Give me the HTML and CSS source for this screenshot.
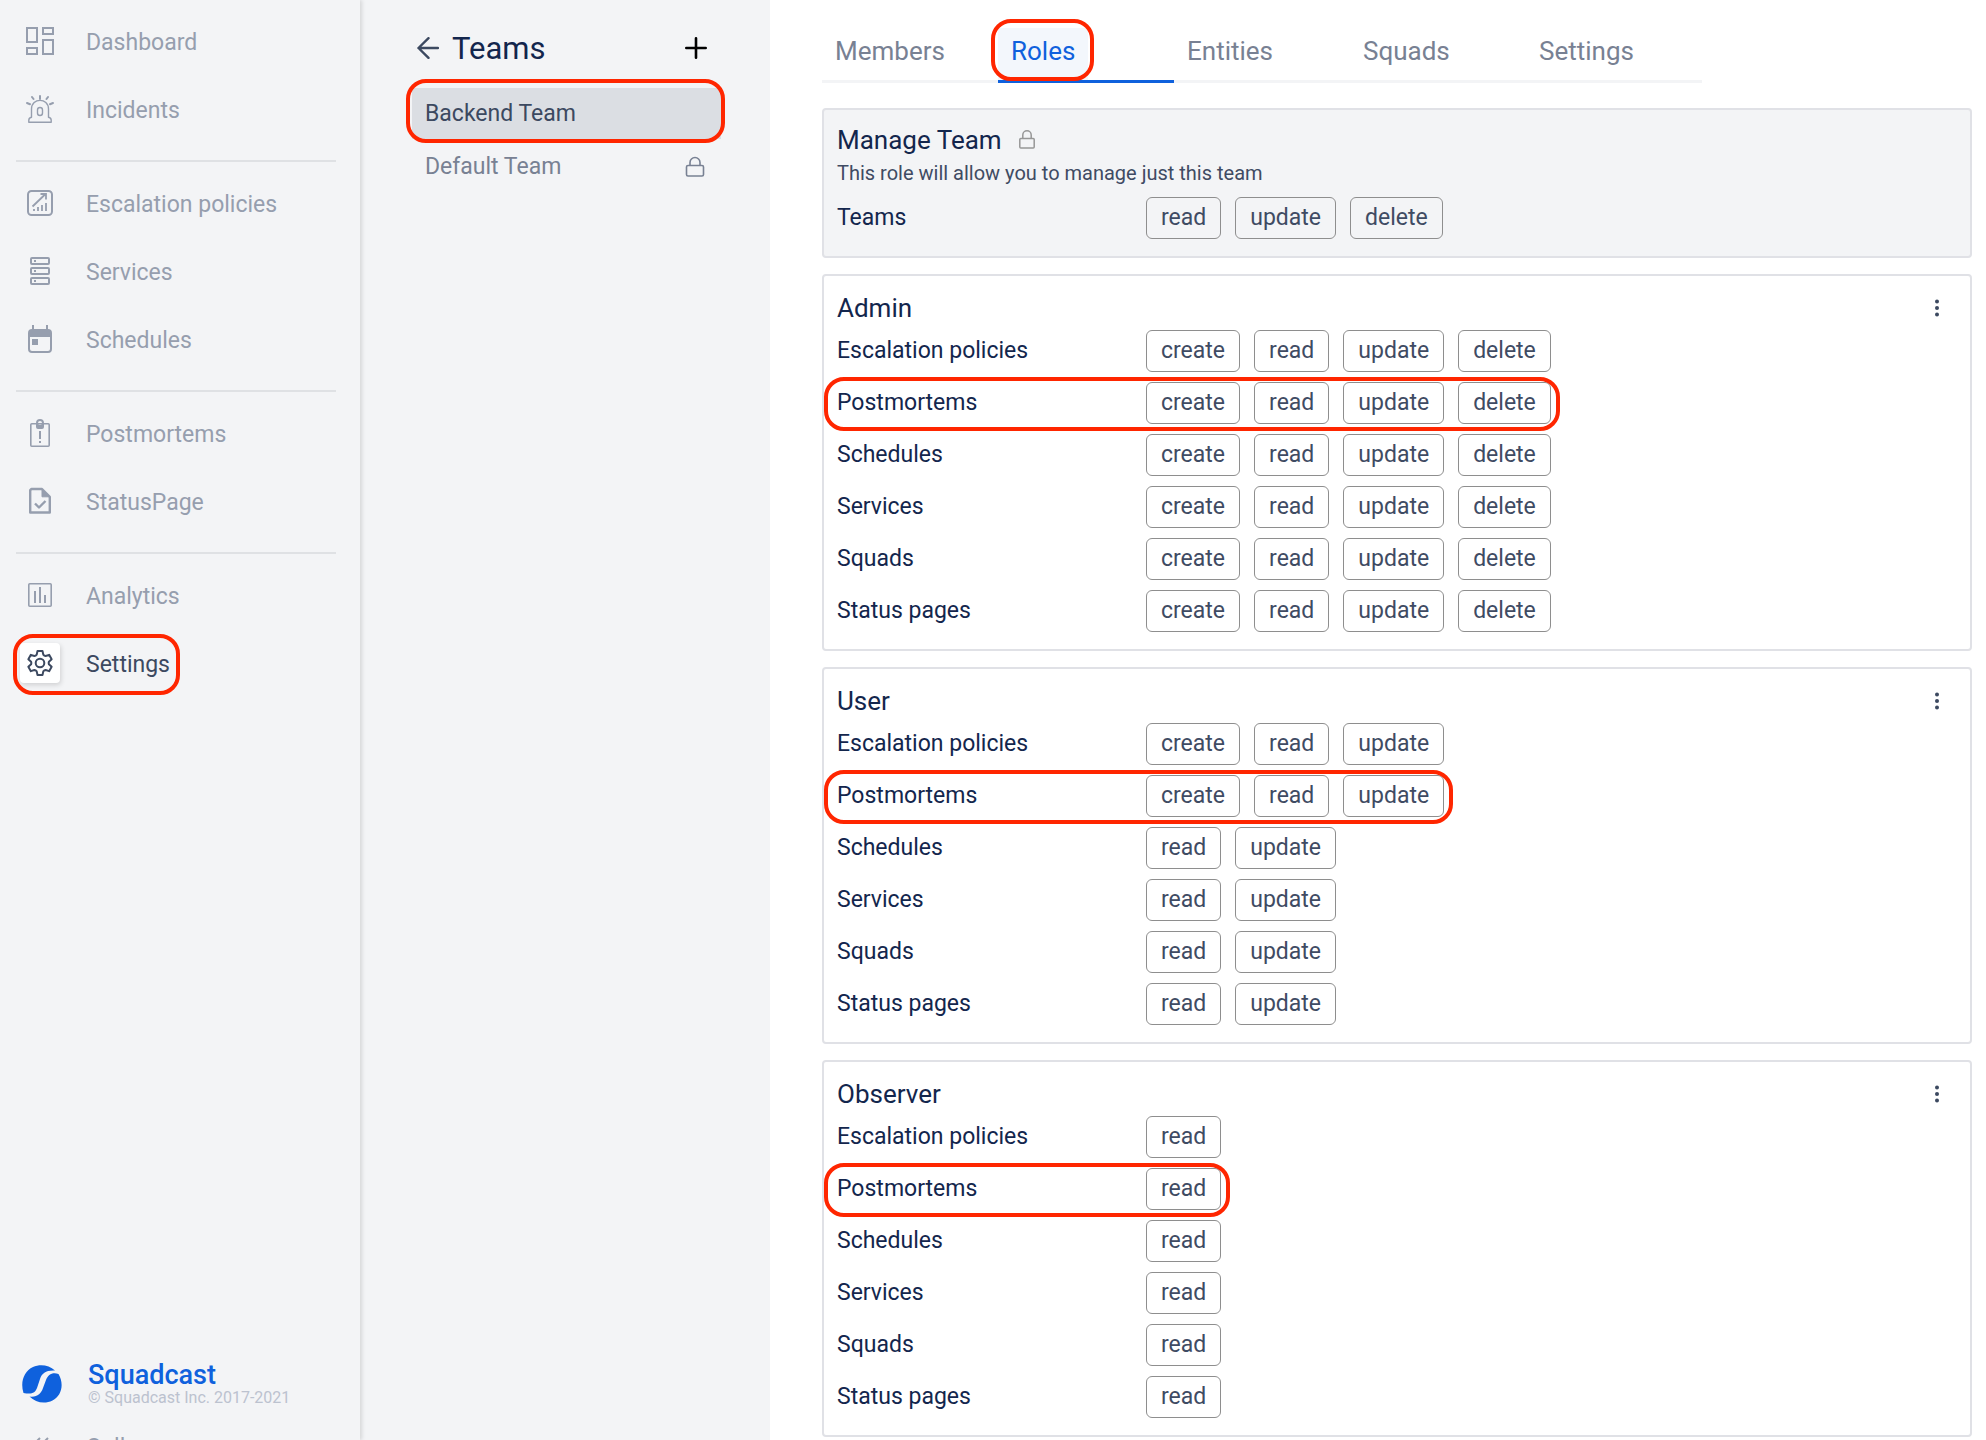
FILE: index.html
```html
<!DOCTYPE html>
<html lang="en">
<head>
<meta charset="utf-8">
<title>Squadcast – Team roles</title>
<link rel="stylesheet" href="styles.css">
</head>
<body>
<div class="app">
  <aside class="sidebar">
    <nav class="nav" aria-label="Main">
      <div class="nav-group">
        <a class="nav-item" href="#"><span class="nav-icon"><svg width="28" height="28" viewBox="0 0 28 28" fill="none" stroke="currentColor" stroke-width="2"><path d="M1 1h10v14H1zM17 1h10v6H17zM1 21h10v6H1zM17 13h10v14H17z"/></svg></span><span class="nav-text">Dashboard</span></a>
        <a class="nav-item" href="#"><span class="nav-icon"><svg width="28" height="28" viewBox="0 0 28 28" fill="none" stroke="currentColor" stroke-width="1.400" stroke-linecap="round" stroke-linejoin="round"><path d="M5.500 22.300V14C5.500 2.500 22.500 2.500 22.500 14v8.300c2 .3 2.700 1.200 2.700 3v2H2.800v-2c0-1.800.7-2.700 2.700-3z"/><rect x="11.500" y="12.500" width="5" height="8" rx="2.500"/><path stroke-width="2" d="M14 1v3M6 2l1.500 2M22 2l-1.500 2M1 8l3 1.200M27 8l-3 1.200"/></svg></span><span class="nav-text">Incidents</span></a>
      </div>
      <div class="nav-group">
        <a class="nav-item" href="#"><span class="nav-icon"><svg width="28" height="28" viewBox="0 0 28 28" fill="none" stroke="currentColor" stroke-width="2"><rect x="2" y="2" width="24" height="24" rx="3.500"/><path d="M6.500 17.500 19 5.500M14.500 5H20v5.500" stroke-width="1.800"/><path d="M8 20v2M12 18v4M16 16v6M20 14v8" stroke-width="1.800"/></svg></span><span class="nav-text">Escalation policies</span></a>
        <a class="nav-item" href="#"><span class="nav-icon"><svg width="28" height="28" viewBox="0 0 28 28" fill="none" stroke="currentColor" stroke-width="2"><rect x="5" y="1" width="18" height="6" rx="1"/><rect x="5" y="11" width="18" height="6" rx="1"/><rect x="5" y="21" width="18" height="6" rx="1"/><path d="M8 4h2M8 14h2M8 24h2"/></svg></span><span class="nav-text">Services</span></a>
        <a class="nav-item" href="#"><span class="nav-icon"><svg width="28" height="28" viewBox="0 0 28 28" fill="none" stroke="currentColor" stroke-width="2"><rect x="3" y="5" width="22" height="22" rx="3"/><path d="M7 0v5M21 0v5"/><path fill="currentColor" stroke="none" d="M3 5h22v7H3zM6 14h6v6H6z"/></svg></span><span class="nav-text">Schedules</span></a>
      </div>
      <div class="nav-group">
        <a class="nav-item" href="#"><span class="nav-icon"><svg width="28" height="28" viewBox="0 0 28 28" fill="none" stroke="currentColor" stroke-width="1.600"><rect x="4.800" y="4.800" width="18.400" height="22.400" rx="1"/><path d="M14 12v8M14 22v2" stroke-width="2"/><path fill="currentColor" stroke="none" fill-rule="evenodd" d="M10 4a4 4 0 0 1 8 0v4a2 2 0 0 1-2 2h-4a2 2 0 0 1-2-2zM14 2a2 2 0 1 0 0 4 2 2 0 0 0 0-4z"/></svg></span><span class="nav-text">Postmortems</span></a>
        <a class="nav-item" href="#"><span class="nav-icon"><svg width="28" height="28" viewBox="0 0 28 28" fill="none" stroke="currentColor" stroke-width="2.400" stroke-linejoin="round"><path d="M5.500 2H16l7.800 7.800V25.500H4.200V3.200z"/><path d="M9 16.500l4 4 6.500-6.500"/><path fill="currentColor" d="M16 2v7.800h7.800z" stroke-width="1"/></svg></span><span class="nav-text">StatusPage</span></a>
      </div>
      <div class="nav-group">
        <a class="nav-item" href="#"><span class="nav-icon"><svg width="28" height="28" viewBox="0 0 28 28" fill="none" stroke="currentColor" stroke-width="1.600"><rect x="2.800" y="2.800" width="22.400" height="22.400" rx="1"/><path d="M9 10v12M14 6v16M19 14v8" stroke-width="2"/></svg></span><span class="nav-text">Analytics</span></a>
        <a class="nav-item nav-item-active" href="#"><span class="nav-icon"><svg width="28" height="28" viewBox="-14 -14 28 28" fill="none" stroke="currentColor" stroke-width="2" stroke-linejoin="round"><path d="M-2.500-12H2.500L3.300-8.400Q4.200-7.200 5.620-7.060L9.140-8.170 11.640-3.830 8.920-1.340Q8.400 0 8.920 1.340L11.640 3.830 9.140 8.170 5.620 7.060Q4.200 7.200 3.300 8.400L2.500 12H-2.500L-3.300 8.400Q-4.200 7.200-5.620 7.060L-9.140 8.170-11.640 3.830-8.920 1.340Q-8.400 0-8.920-1.340L-11.640-3.830-9.140-8.170-5.620-7.060Q-4.200-7.200-3.300-8.400z"/><circle r="4.300"/></svg></span><span class="nav-text">Settings</span><span class="mark mark-nav"></span></a>
      </div>
    </nav>
    <footer class="side-foot">
      <div class="brand">
        <svg class="brand-logo" width="40" height="38" viewBox="0 0 40 38" fill="#0f61dd"><path d="M1.500 28C-2 17 2 6 11 2 18-1 27 0 33 5.500 24 5 20 8 18 14l-3 9c-2 5-5 6.500-13.500 5z"/><path d="M7.500 31.500C15 32.500 19 29 21 23l3-8c2-5 6-8 12.500-6 6 10 3 22-6 26.500-8 4-17 2-23-4z"/></svg>
        <div class="brand-text"><strong class="brand-name">Squadcast</strong><small class="brand-copy">© Squadcast Inc. 2017-2021</small></div>
      </div>
      <button class="nav-item collapse" type="button"><span class="nav-icon"><svg width="28" height="28" viewBox="0 0 28 28" fill="none" stroke="currentColor" stroke-width="2"><path d="M14 6l-8 8 8 8M22 6l-8 8 8 8"/></svg></span><span class="nav-text">Collapse</span></button>
    </footer>
  </aside>

  <section class="teams">
    <header class="teams-head">
      <button class="icon-btn" type="button" aria-label="Back"><svg width="22" height="22" viewBox="0 0 22 22" fill="none" stroke="#3c4960" stroke-width="2.400" stroke-linecap="round" stroke-linejoin="round"><path d="M21 11H1.500M11.500 1.200 1.500 11l10 9.800"/></svg></button>
      <h1 class="teams-title">Teams</h1>
      <button class="icon-btn" type="button" aria-label="Add team"><svg width="22" height="22" viewBox="0 0 22 22" fill="none" stroke="#000" stroke-width="2.600" stroke-linecap="round"><path d="M11 1.300v19.400M1.300 11h19.400"/></svg></button>
    </header>
    <a class="team team-active" href="#">Backend Team<span class="mark mark-team"></span></a>
    <a class="team" href="#">Default Team<svg width="20" height="22" viewBox="0 0 20 22" fill="none" stroke="currentColor" stroke-width="1.600"><rect x="1.500" y="9.500" width="17" height="10.500" rx="1.500"/><path d="M5 9.500V6.500a5 5 0 0 1 10 0v3"/></svg></a>
  </section>

  <main class="main">
    <nav class="tabs" aria-label="Team sections">
      <a class="tab" href="#"><span class="tab-label">Members</span></a>
      <a class="tab tab-active" href="#"><span class="tab-label">Roles<span class="mark mark-tab"></span></span></a>
      <a class="tab" href="#"><span class="tab-label">Entities</span></a>
      <a class="tab" href="#"><span class="tab-label">Squads</span></a>
      <a class="tab" href="#"><span class="tab-label">Settings</span></a>
    </nav>

    <section class="card card-locked">
      <header class="card-head"><h2 class="card-title">Manage Team</h2><svg class="card-lock" width="18" height="20" viewBox="0 0 18 20" fill="none" stroke="#979797" stroke-width="1.500"><rect x="1.800" y="8.500" width="14.400" height="9.500" rx="1"/><path d="M4.800 8.500V5a4.200 4.200 0 0 1 8.400 0v3.500"/></svg></header>
      <p class="card-desc">This role will allow you to manage just this team</p>
      <table class="perms">
        <tr><th scope="row">Teams</th><td><span class="chip">read</span><span class="chip">update</span><span class="chip">delete</span></td></tr>
      </table>
    </section>

    <section class="card">
      <header class="card-head"><h2 class="card-title">Admin</h2><button class="icon-btn more" type="button" aria-label="Admin options"><svg width="6" height="18" viewBox="0 0 6 18" fill="#3c4960"><circle cx="3" cy="2.500" r="2"/><circle cx="3" cy="9" r="2"/><circle cx="3" cy="15.500" r="2"/></svg></button></header>
      <table class="perms">
        <tr><th scope="row">Escalation policies</th><td><span class="chip">create</span><span class="chip">read</span><span class="chip">update</span><span class="chip">delete</span></td></tr>
        <tr><th scope="row">Postmortems</th><td><span class="chip">create</span><span class="chip">read</span><span class="chip">update</span><span class="chip">delete</span><span class="mark mark-row"></span></td></tr>
        <tr><th scope="row">Schedules</th><td><span class="chip">create</span><span class="chip">read</span><span class="chip">update</span><span class="chip">delete</span></td></tr>
        <tr><th scope="row">Services</th><td><span class="chip">create</span><span class="chip">read</span><span class="chip">update</span><span class="chip">delete</span></td></tr>
        <tr><th scope="row">Squads</th><td><span class="chip">create</span><span class="chip">read</span><span class="chip">update</span><span class="chip">delete</span></td></tr>
        <tr><th scope="row">Status pages</th><td><span class="chip">create</span><span class="chip">read</span><span class="chip">update</span><span class="chip">delete</span></td></tr>
      </table>
    </section>

    <section class="card">
      <header class="card-head"><h2 class="card-title">User</h2><button class="icon-btn more" type="button" aria-label="User options"><svg width="6" height="18" viewBox="0 0 6 18" fill="#3c4960"><circle cx="3" cy="2.500" r="2"/><circle cx="3" cy="9" r="2"/><circle cx="3" cy="15.500" r="2"/></svg></button></header>
      <table class="perms">
        <tr><th scope="row">Escalation policies</th><td><span class="chip">create</span><span class="chip">read</span><span class="chip">update</span></td></tr>
        <tr><th scope="row">Postmortems</th><td><span class="chip">create</span><span class="chip">read</span><span class="chip">update</span><span class="mark mark-row"></span></td></tr>
        <tr><th scope="row">Schedules</th><td><span class="chip">read</span><span class="chip">update</span></td></tr>
        <tr><th scope="row">Services</th><td><span class="chip">read</span><span class="chip">update</span></td></tr>
        <tr><th scope="row">Squads</th><td><span class="chip">read</span><span class="chip">update</span></td></tr>
        <tr><th scope="row">Status pages</th><td><span class="chip">read</span><span class="chip">update</span></td></tr>
      </table>
    </section>

    <section class="card">
      <header class="card-head"><h2 class="card-title">Observer</h2><button class="icon-btn more" type="button" aria-label="Observer options"><svg width="6" height="18" viewBox="0 0 6 18" fill="#3c4960"><circle cx="3" cy="2.500" r="2"/><circle cx="3" cy="9" r="2"/><circle cx="3" cy="15.500" r="2"/></svg></button></header>
      <table class="perms">
        <tr><th scope="row">Escalation policies</th><td><span class="chip">read</span></td></tr>
        <tr><th scope="row">Postmortems</th><td><span class="chip">read</span><span class="mark mark-row"></span></td></tr>
        <tr><th scope="row">Schedules</th><td><span class="chip">read</span></td></tr>
        <tr><th scope="row">Services</th><td><span class="chip">read</span></td></tr>
        <tr><th scope="row">Squads</th><td><span class="chip">read</span></td></tr>
        <tr><th scope="row">Status pages</th><td><span class="chip">read</span></td></tr>
      </table>
    </section>
  </main>
</div>
</body>
</html>
```
FILE: styles.css
```css
* { box-sizing: border-box; }
body {
  margin: 0;
  font-family: Roboto, "Liberation Sans", sans-serif;
  font-size: 23px;
  line-height: 28px;
  color: #13264d;
  background: #fff;
}
a { color: inherit; text-decoration: none; }
h1, h2, p { margin: 0; font-weight: 400; }
svg { display: block; flex: none; }
button { font: inherit; color: inherit; background: none; border: 0; padding: 0; cursor: pointer; }

.app { display: flex; height: 100vh; overflow: hidden; }

/* Main navigation */
.sidebar {
  position: relative;
  z-index: 1;
  flex: none;
  width: 360px;
  display: flex;
  flex-direction: column;
  background: #f3f4f6;
  box-shadow: 2px 0 4px rgba(0, 0, 0, .12);
  color: #969eae;
}
.nav-group { margin: 0 24px 0 16px; padding: 7px 0 17px; }
.nav-group + .nav-group { border-top: 2px solid #dfe1e4; }
.nav-item { position: relative; display: flex; align-items: center; gap: 26px; width: max-content; height: 68px; padding-left: 4px; }
.nav-icon { display: grid; place-items: center; width: 40px; height: 40px; border-radius: 4px; }
.nav-text { padding-top: 3px; }
.nav-item-active { color: #3c4960; }
.nav-item-active .nav-icon { background: #fff; box-shadow: 1px 2px 5px rgba(0, 0, 0, .15); }
.side-foot { margin: auto 0 -40px 16px; }
.brand { display: flex; align-items: center; gap: 26px; padding-left: 6px; margin-bottom: 5px; }
.brand-text { display: flex; flex-direction: column; }
.brand-name { font-size: 27px; font-weight: 500; line-height: 28px; color: #0f61dd; }
.brand-copy { font-size: 16px; line-height: 18px; color: #bcc2cf; }

/* Team list */
.teams { flex: none; width: 410px; padding: 22px 49px 0 52px; background: #f3f4f6; }
.teams-head { display: flex; align-items: center; gap: 13px; height: 52px; padding: 0 14px 0 5px; margin-bottom: 14px; }
.teams-title { flex: 1; padding-top: 2px; font-size: 31px; line-height: 36px; }
.team { position: relative; display: flex; align-items: center; justify-content: space-between; height: 51px; padding: 0 16px 0 13px; margin-bottom: 2px; color: #788193; }
.team-active { background: #dbdee3; color: #3c4960; }

/* Tabs */
.main { flex: 1; min-width: 0; padding: 28px 14px 0 52px; }
.tabs { display: flex; width: max-content; margin-bottom: 25px; }
.tab { width: 176px; height: 55px; border-bottom: 3px solid #f3f4f6; color: #788193; font-size: 26px; line-height: 46px; }
.tab-label { position: relative; display: block; width: max-content; height: 52px; padding: 0 13px; }
.tab-active { border-color: #0f61dd; color: #0f61dd; }
.tab-active .tab-label { background: #f3f7fc; }

/* Role cards */
.card { margin-bottom: 16px; padding: 15px 13px 12px; border: 2px solid #e0e1e6; border-radius: 4px; }
.card-locked { padding-top: 13px; background: #f3f4f6; }
.card-head { display: flex; align-items: center; height: 34px; }
.card-title { font-size: 26px; line-height: 34px; }
.card-lock { margin-left: 16px; }
.card-desc { height: 35px; font-size: 20px; line-height: 33px; color: #3f4b63; }
.more { margin-left: auto; padding: 8px 28px; margin-right: -11px; }
.perms { border-collapse: collapse; }
.perms tr { position: relative; height: 52px; }
.perms th { width: 309px; padding: 0; text-align: left; font-weight: 400; }
.perms td { display: flex; align-items: center; gap: 14px; height: 52px; padding: 0; }
.chip { height: 42px; padding: 0 14px; border: 1px solid #8e8e8e; border-radius: 6px; line-height: 40px; color: #3f4b63; }

/* Callout outlines */
.mark { position: absolute; border: 4px solid #ff2600; border-radius: 20px; pointer-events: none; }
.mark-nav { inset: 5px -10px 2px -3px; }
.mark-team { inset: -9px -4px -4px -6px; }
.mark-tab { inset: -9px -6px -1px -7px; }
.mark-row { inset: 0 -9px -2px -13px; }
```
